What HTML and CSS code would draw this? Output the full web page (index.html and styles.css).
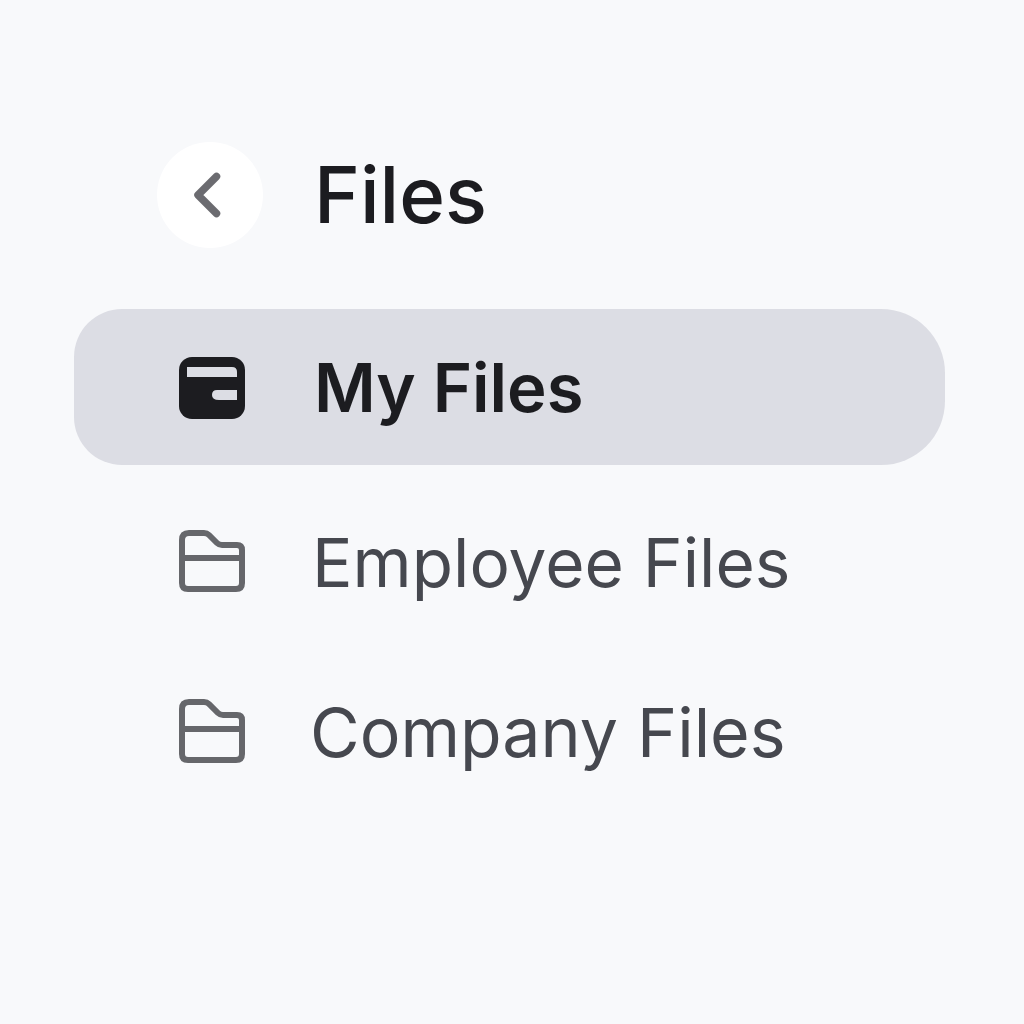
FILE: index.html
```html
<!DOCTYPE html>
<html lang="en">
<head>
    <meta charset="UTF-8">
    <meta name="viewport" content="width=device-width, initial-scale=1.0">
    <title>Files</title>
    <link rel="stylesheet" href="styles.css">
</head>
<body>
    <aside class="sidebar">
        <header class="sidebar-header">
            <button class="back-button" aria-label="Back">
                <svg width="30" height="46" viewBox="0 0 30 46" fill="none">
                    <path d="M24.5 4.5 L6 23 L24.5 41.5" stroke="#6b6b70" stroke-width="7.5" stroke-linecap="round" stroke-linejoin="round"/>
                </svg>
            </button>
            <h1>Files</h1>
        </header>

        <nav class="file-nav">
            <a class="nav-item active" href="#">
                <svg class="nav-icon" width="66" height="62" viewBox="0 0 66 62">
                    <rect width="66" height="62" rx="13" fill="#1c1c20"/>
                    <path d="M8 10 H53 Q58 10 58 15 V20 H8 Z" fill="#dcdde4"/>
                    <path d="M38 33 H58 V43 H40 Q33 43 33 38 Q33 33 38 33 Z" fill="#dcdde4"/>
                </svg>
                <span>My Files</span>
            </a>
            <a class="nav-item" href="#">
                <svg class="nav-icon" width="66" height="62" viewBox="0 0 66 62" fill="none">
                    <path d="M3 27 V10 Q3 3 10 3 H25 Q28 3 30 5 L38 13 Q40 15 43 15 H58 Q63 15 63 20 V53 Q63 59 57 59 H9 Q3 59 3 53 Z M3 28 H63" stroke="#66676b" stroke-width="6" stroke-linejoin="round"/>
                </svg>
                <span>Employee Files</span>
            </a>
            <a class="nav-item company" href="#">
                <svg class="nav-icon" width="66" height="64" viewBox="0 0 66 64" fill="none">
                    <path d="M3 29 V10 Q3 3 10 3 H25 Q28 3 30 5 L39 14 Q41 16 44 16 H58 Q63 16 63 21 V55 Q63 61 57 61 H9 Q3 61 3 55 Z M3 30 H63" stroke="#66676b" stroke-width="6" stroke-linejoin="round"/>
                </svg>
                <span>Company Files</span>
            </a>
        </nav>
    </aside>
</body>
</html>
```

FILE: styles.css
```css
/* Global Styles */
body {
    font-family: Inter, "Liberation Sans", sans-serif;
    background-color: #f8f9fb;
    color: #1c1c20;
    margin: 0;
    min-height: 100vh;
}

.sidebar {
    width: 871px;
    padding: 142px 0 0 74px;
}

/* Header Styles */
.sidebar-header {
    display: flex;
    align-items: center;
    gap: 51px;
    padding-left: 83px;
    margin-bottom: 61px;
}

.back-button {
    width: 106px;
    height: 106px;
    padding: 0 6px 0 0;
    border: none;
    border-radius: 50%;
    background-color: #ffffff;
    display: flex;
    align-items: center;
    justify-content: center;
}

h1 {
    font-size: 78px;
    font-weight: 500;
    line-height: 106px;
    margin: 0;
}

/* Nav Styles */
.file-nav {
    display: flex;
    flex-direction: column;
}

.nav-item {
    display: flex;
    align-items: center;
    gap: 67px;
    height: 170px;
    padding-left: 105px;
    font-size: 67.5px;
    color: #46484f;
    text-decoration: none;
}

.nav-item.active {
    height: 156px;
    margin-bottom: 12px;
    gap: 69px;
    border-radius: 48px 64px 64px 48px;
    background-color: #dcdde4;
    color: #1c1c20;
    font-size: 67px;
    font-weight: 600;
}

.nav-item.company {
    gap: 65px;
    font-size: 68px;
}

.nav-icon {
    flex-shrink: 0;
    margin-bottom: 2px;
}

.nav-item.active .nav-icon {
    margin-bottom: 0;
    margin-top: 2px;
}
```
